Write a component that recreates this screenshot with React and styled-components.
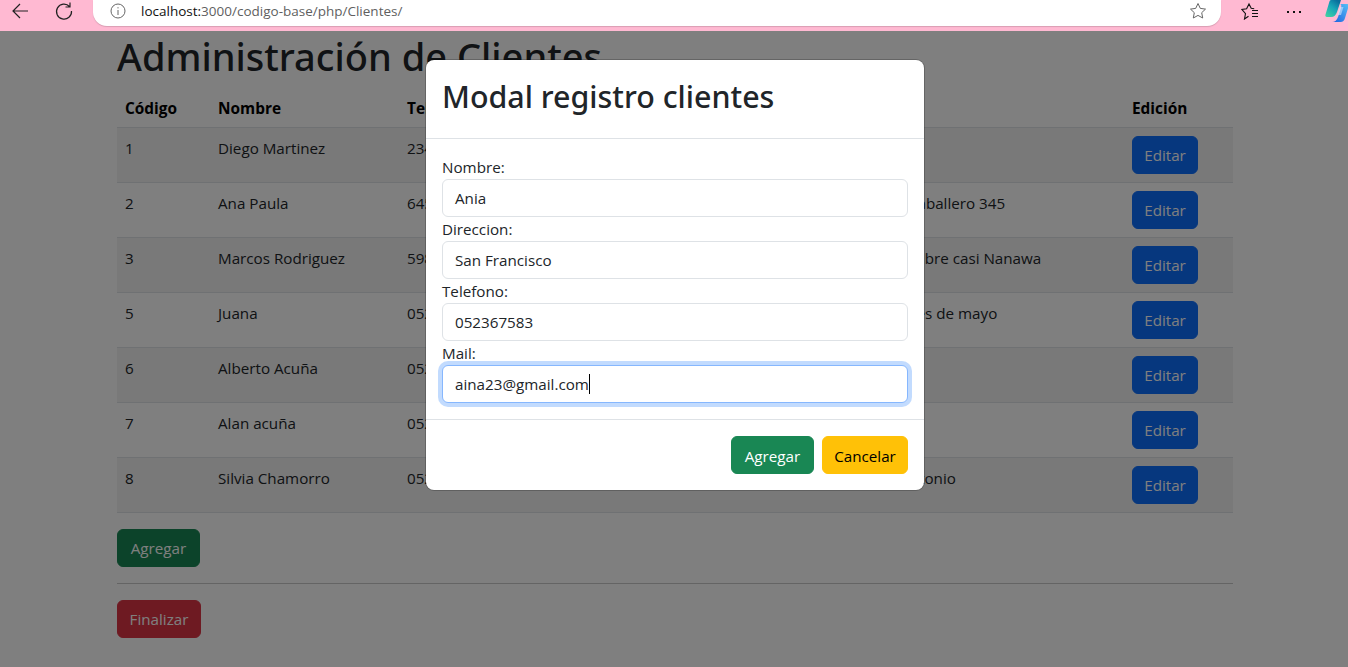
import React from "react";
import styled, { createGlobalStyle } from "styled-components";

const Global = createGlobalStyle`
  html, body { margin: 0; padding: 0; height: 100%; overflow: hidden; background: #fff; }
  body { font-family: "Open Sans", "Noto Sans", sans-serif; font-size: 15.2px; line-height: 24px; color: #212529; }
  * { box-sizing: border-box; }
`;

const Chrome = styled.header`
  height: 31px; background: #ffb9d2; display: flex; align-items: flex-start; position: relative; z-index: 3;
`;
const NavIcon = styled.div`
  width: 20px; height: 20px; margin-left: ${p => p.$ml}px; margin-top: 1px; flex: none; display: flex;
`;
const AddressBar = styled.div`
  margin-left: 19px; width: 1128px; height: 26px; background: #fff; border-radius: 0 0 14px 14px;
  display: flex; align-items: center; padding: 0 14px 4px 17px; flex: none;
  box-shadow: 0 1px 1px rgba(0,0,0,.15);
`;
const Url = styled.span`
  margin-left: 15px; font-size: 13.5px; color: #5f5f5f; flex: 1; letter-spacing: 0;
  b { color: #111; font-weight: 400; }
`;
const Page = styled.main`
  position: relative; height: 636px; padding: 0 115px 0 117px; overflow: hidden;
`;
const Title = styled.h1`
  margin: 1px 0 6px; font: 500 38px/48px "Noto Sans", sans-serif; color: #212529; white-space: nowrap;
`;
const Table = styled.table`
  width: 100%; border-collapse: collapse; table-layout: fixed; margin-bottom: 16px;
`;
const Th = styled.th`
  text-align: left; font-weight: 700; padding: 11px 8px 5px; height: 41px; border-bottom: 1px solid #dee2e6; font-size: 15.4px; color: #000;
  white-space: nowrap; overflow: hidden;
`;
const Row = styled.tr`
  background: ${p => (p.$odd ? "#f2f2f2" : "#fff")};
`;
const Td = styled.td`
  padding: 8px; vertical-align: top; height: 55px; border-bottom: 1px solid #dee2e6; color: #212529; white-space: nowrap; overflow: hidden;
`;
const Button = styled.button`
  height: 38px; padding: 1px 0 0; border: 1px solid ${p => p.$bg}; border-radius: 6px; background: ${p => p.$bg};
  color: ${p => p.$fg || "#fff"}; font: 400 15.2px/24px "Open Sans", sans-serif; width: ${p => p.$w}px; display: block;
`;
const Rule = styled.hr`
  border: 0; border-top: 1px solid #c8c8c8; margin: 16px 0;
`;
const Backdrop = styled.div`
  position: absolute; inset: 0; background: rgba(0,0,0,.5); z-index: 1;
`;
const Modal = styled.section`
  position: absolute; left: 426px; top: 29px; width: 498px; height: 430px; background: #fff; border-radius: 8px; z-index: 2;
  display: flex; flex-direction: column;
  box-shadow: 0 0 0 1px rgba(0,0,0,.2);
`;
const ModalHead = styled.div`
  height: 79px; padding: 16px; border-bottom: 1px solid #dee2e6;
`;
const ModalTitle = styled.h2`
  margin: 0; font: 500 30.4px/42px "Noto Sans", sans-serif; color: #212529;
`;
const ModalBody = styled.div`
  padding: 16px; height: 281px; border-bottom: 1px solid #dee2e6;
`;
const Label = styled.label`
  display: block; line-height: 24px; color: #212529;
`;
const Input = styled.div`
  height: 38px; border: 1px solid ${p => (p.$focus ? "#86b7fe" : "#dee2e6")}; border-radius: 6px; padding: 0 12px;
  display: flex; align-items: center; color: #212529; background: #fff;
  box-shadow: ${p => (p.$focus ? "0 0 0 4px rgba(13,110,253,.25)" : "none")};
`;
const Caret = styled.span`
  width: 1px; height: 20px; background: #000;
`;
const ModalFoot = styled.div`
  padding: 16px; display: flex; justify-content: flex-end; gap: 8px;
`;

const rows = [
  ["1", "Diego Martinez", "2345678", "Palma 120"],
  ["2", "Ana Paula", "6456789", "Mariscal Caballero 345"],
  ["3", "Marcos Rodriguez", "5981234", "Av. Noviembre casi Nanawa"],
  ["5", "Juana", "0523675", "Ruta Héroes de mayo"],
  ["6", "Alberto Acuña", "0523671", "Luque"],
  ["7", "Alan acuña", "0523672", "Limpio"],
  ["8", "Silvia Chamorro", "0523673", "Av. San Antonio"],
];

const Back = () => (
  <svg width="20" height="20" viewBox="0 0 20 20" fill="none" stroke="#222" strokeWidth="1.2">
    <path d="M18 10H3M10 3l-7 7 7 7" />
  </svg>
);
const Reload = () => (
  <svg width="20" height="20" viewBox="0 0 20 20" fill="none" stroke="#222" strokeWidth="1.2">
    <path d="M15.5 5.5A7.5 7.5 0 1 0 17.5 10M16 1.5v4.5h-4.5" />
  </svg>
);
const Info = () => (
  <svg width="16" height="16" viewBox="0 0 16 16" fill="none" stroke="#666" strokeWidth="1">
    <circle cx="8" cy="8" r="7" />
    <path d="M8 7v5M8 4.2v1.2" />
  </svg>
);
const Star = ({ color = "#666" }) => (
  <svg width="18" height="18" viewBox="0 0 18 18" fill="none" stroke={color} strokeWidth="1">
    <path d="M9 1.5l2.3 4.9 5.2.7-3.8 3.6 1 5.3L9 13.4 4.3 16l1-5.3L1.5 7.1l5.2-.7z" />
  </svg>
);
const Favs = () => (
  <svg width="18" height="18" viewBox="0 0 18 18" fill="none" stroke="#111" strokeWidth="1.1">
    <path d="M7.5 14.2L3.5 17l1-5.3L1 7.5l4.6-.7L8 2l2.2 4.3 3 .5M11 8.5h6M11 11.5h6M11 14.5h6" />
  </svg>
);
const Dots = () => (
  <svg width="18" height="18" viewBox="0 0 18 18" fill="#111">
    <rect x="2" y="9" width="2" height="2" /><rect x="8" y="9" width="2" height="2" /><rect x="14" y="9" width="2" height="2" />
  </svg>
);
const Copilot = () => (
  <svg width="24" height="22" viewBox="0 0 24 22">
    <defs>
      <linearGradient id="cg1" x1="0" y1="1" x2="0.7" y2="0"><stop offset="0" stopColor="#43d6a0" /><stop offset=".6" stopColor="#18a5b8" /><stop offset="1" stopColor="#0a6f9c" /></linearGradient>
      <linearGradient id="cg2" x1="0" y1="1" x2="1" y2="0"><stop offset="0" stopColor="#1a5fe0" /><stop offset="1" stopColor="#58c0f5" /></linearGradient>
    </defs>
    <path d="M6 0h10l-4 12c-1 3-3 5-6 5H2c-1.500 0-2-1-1.500-2.500L4 3C4.500 1 5 0 6 0z" fill="url(#cg1)" />
    <path d="M15 4h7c1.500 0 2 1 1.500 2.500L20 18c-.7 2.500-2 4-4.500 4H7c3 0 5-2 6-5l3-9c.5-2 .5-4-1-4z" fill="url(#cg2)" />
    <path d="M15 7h3.500l-2.500 8h-3.500z" fill="#cfe8ff" opacity=".6" />
  </svg>
);

const IconSlot = styled.div`
  flex: none; width: 18px; height: 18px; margin-left: ${p => p.$ml}px; margin-top: 2px; display: flex;
`;
const CopilotSlot = styled.div`
  flex: none; width: 24px; height: 22px; margin-left: 22px; overflow: hidden;
`;

export default function App() {
  return (
    <>
      <Global />
      <Chrome>
        <NavIcon $ml={10}><Back /></NavIcon>
        <NavIcon $ml={24}><Reload /></NavIcon>
        <AddressBar>
          <Info />
          <Url><b>localhost:</b>3000/codigo-base/php/Clientes/</Url>
          <Star />
        </AddressBar>
        <IconSlot $ml={20}><Favs /></IconSlot>
        <IconSlot $ml={26}><Dots /></IconSlot>
        <CopilotSlot><Copilot /></CopilotSlot>
      </Chrome>
      <Page>
        <Title>Administración de Clientes</Title>
        <Table>
          <colgroup>
            <col style={{ width: 93 }} /><col style={{ width: 189 }} /><col style={{ width: 438 }} /><col />
            <col style={{ width: 109 }} />
          </colgroup>
          <thead>
            <tr><Th>Código</Th><Th>Nombre</Th><Th>Telefono</Th><Th>Direccion</Th><Th>Edición</Th></tr>
          </thead>
          <tbody>
            {rows.map((r, i) => (
              <Row key={r[0]} $odd={i % 2 === 0}>
                <Td>{r[0]}</Td><Td>{r[1]}</Td><Td>{r[2]}</Td><Td>{r[3]}</Td>
                <Td><Button $bg="#0d6efd" $w={66}>Editar</Button></Td>
              </Row>
            ))}
          </tbody>
        </Table>
        <Button $bg="#198754" $w={83}>Agregar</Button>
        <Rule />
        <Button $bg="#dc3545" $w={84}>Finalizar</Button>
        <Backdrop />
        <Modal>
          <ModalHead><ModalTitle>Modal registro clientes</ModalTitle></ModalHead>
          <ModalBody>
            <Label>Nombre:</Label><Input>Ania</Input>
            <Label>Direccion:</Label><Input>San Francisco</Input>
            <Label>Telefono:</Label><Input>052367583</Input>
            <Label>Mail:</Label><Input $focus>aina23@gmail.com<Caret /></Input>
          </ModalBody>
          <ModalFoot>
            <Button $bg="#198754" $w={83}>Agregar</Button>
            <Button $bg="#ffc107" $fg="#000" $w={86}>Cancelar</Button>
          </ModalFoot>
        </Modal>
      </Page>
    </>
  );
}
